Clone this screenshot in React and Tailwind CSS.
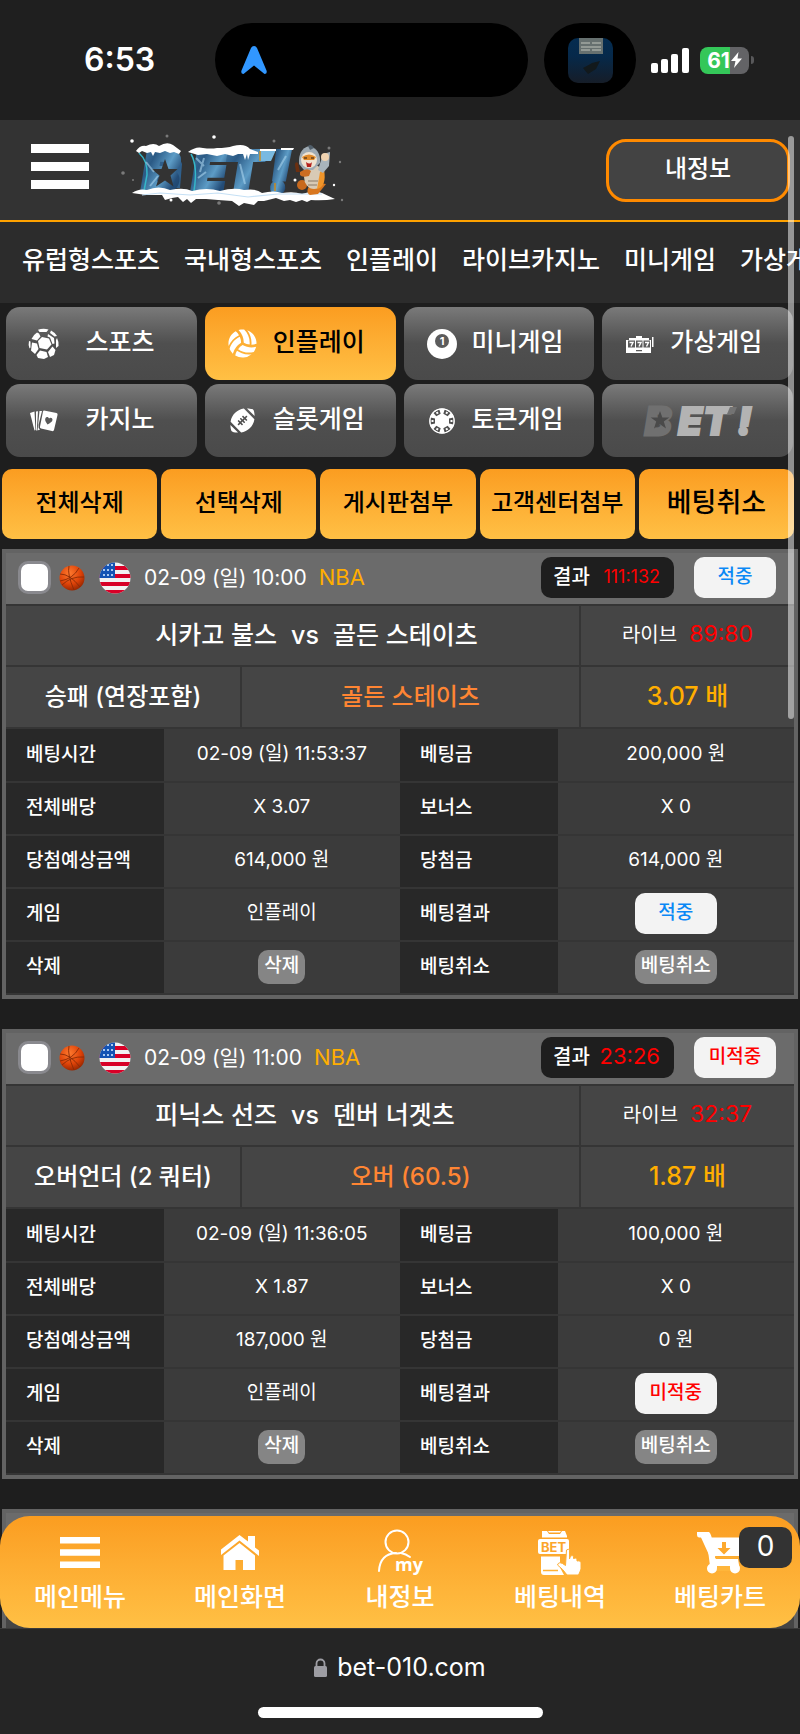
import { FaVolleyballBall, FaFootballBall } from 'react-icons/fa';

const navLinks = ['유럽형스포츠', '국내형스포츠', '인플레이', '라이브카지노', '미니게임', '가상게임'];

const actions = ['전체삭제', '선택삭제', '게시판첨부', '고객센터첨부'];

const bets = [
  {
    id: 1,
    date: '02-09 (일) 10:00',
    league: 'NBA',
    result: '111:132',
    live: '89:80',
    won: true,
    home: '시카고 불스',
    away: '골든 스테이츠',
    market: '승패 (연장포함)',
    pick: '골든 스테이츠',
    odds: '3.07',
    betTime: '02-09 (일) 11:53:37',
    stake: '200,000 원',
    expected: '614,000 원',
    payout: '614,000 원',
  },
  {
    id: 2,
    date: '02-09 (일) 11:00',
    league: 'NBA',
    result: '23:26',
    live: '32:37',
    won: false,
    home: '피닉스 선즈',
    away: '덴버 너겟츠',
    market: '오버언더 (2 쿼터)',
    pick: '오버 (60.5)',
    odds: '1.87',
    betTime: '02-09 (일) 11:36:05',
    stake: '100,000 원',
    expected: '187,000 원',
    payout: '0 원',
  },
];

const SoccerIcon = () => (
  <svg viewBox="0 0 32 32" className="h-8 w-8">
    <g fill="#fff">
      <path d="M14 9l7 1.500 2.500 6-4.500 5-7.500-1.500-1.500-7z" />
      <path d="M10 1.800Q15 0 20.500 1.500L18.500 4h-7z" />
      <path d="M9 4.500l2 1 1.500 3-3.500 4-5.500-1.500Q5 7 9 4.500z" />
      <path d="M23 2.500q4 2 6 5.500l-2.500.5L22 5z" />
      <path d="M20 6l6 4 .5 5.500-2 .500-2.500-6.500-2.500-1z" />
      <path d="M29 10q2 4 1.500 8L28 20V12z" />
      <path d="M1 13l1.500.500v6l-1 1Q0 17 1 13z" />
      <path d="M4 14.500l5 1 1.500 5.500-3.500 5-4-3.500z" />
      <path d="M12 22.500l6.500 1.500L20 29l-4 2-6-1-1.500-3z" />
      <path d="M24.500 18.500l3 3.500-1.500 5-4 2-2-5z" />
    </g>
  </svg>
);

const EightBallIcon = () => (
  <svg viewBox="0 0 30 30" className="h-[30px] w-[30px]">
    <circle cx="15" cy="15" r="15" fill="#fff" />
    <circle cx="15" cy="12" r="7" fill="#5c5c5c" />
    <text x="15" y="16" textAnchor="middle" fontSize="11" fontWeight="700" fill="#fff">1</text>
  </svg>
);

const SlotIcon = () => (
  <svg viewBox="0 0 28 18" className="h-[18px] w-7">
    <path d="M3 3h7V1h6v2h7v2h2v13H0V5h3z" fill="#fff" />
    <path d="M26 2h1.500v10H26z" fill="#fff" />
    <g fill="#5c5c5c">
      <path d="M2 5.500h7v7H2zM10 5.500h6.500v7H10zM17.500 5.500h6.500v7h-6.500zM10 15h6v1.200h-6z" />
    </g>
    <g fill="none" stroke="#fff" strokeWidth="1.400">
      <path d="M3.500 7.500h3.500l-2 4M11.500 7.500H15l-2 4M19 7.500h3.500l-2 4" />
    </g>
  </svg>
);

const CardsIcon = () => (
  <svg viewBox="0 0 28 22" className="h-[22px] w-7">
    <g fill="#fff">
      <path d="M0 3l4.500-1.500L5.500 20 4.500 20.500z" />
      <path d="M6 1.500L8 1.200 6.800 20.500h-.800z" />
      <path d="M9.500 1h2.500L8.500 15q-.5 3 1.500 4.500l-2.500 1z" />
      <path d="M14 .5l12.500 2.500Q28 3.500 27.500 5L24 20q-.500 1.500-2 1L11 18.500q-1.500-.500-1-2L13 1.500q.300-1 1-1z" />
    </g>
    <path d="M17.500 14.500c-2-3-3-4.500-2-6.500 1-1.500 3-1 3.500.500 1.500-1.500 3.500-.500 3.500 1.200 0 2-2.500 3.300-5 4.800z" fill="#5a5a5a" />
  </svg>
);

const ChipIcon = () => (
  <svg viewBox="0 0 26 26" className="h-[26px] w-[26px]">
    <circle cx="13" cy="13" r="12.500" fill="#fff" />
    {[30, 90, 150, 210, 270, 330].map((deg) => (
      <g key={deg} transform={`rotate(${deg} 13 13)`}>
        <path d="M9.500 1.500h7L15.500 6h-5z" fill="#4f4f4f" />
        <path d="M12 2.500h2v2h-2z" fill="#fff" />
      </g>
    ))}
    <circle cx="13" cy="13" r="12.200" fill="none" stroke="#fff" strokeWidth="1.200" />
  </svg>
);

const GhostLogo = () => (
  <svg viewBox="0 0 120 60" className="h-[60px] w-[120px]" fontFamily="Inter" fontWeight="900" fontStyle="italic" fontSize="39">
    <text x="7" y="44" fill="#707070" stroke="#707070" strokeWidth="3">B</text>
    <path d="M22 20l2.300 6.500h7l-5.500 4 2.200 7-6-4.300-6 4.300 2.200-7-5.500-4h7z" fill="#4a4a4a" />
    <g fill="#b3b3b3" stroke="#b3b3b3" strokeWidth="2">
      <text x="40" y="44">E</text>
      <text x="65" y="44">T</text>
      <text x="99" y="44">!</text>
    </g>
    <path d="M92 16h7l-3 7h-7z" fill="#737373" />
  </svg>
);

const SnowLogo = () => (
  <svg viewBox="0 0 226 72" className="h-[72px] w-[226px]" role="img" aria-label="BET!">
    <defs>
      <linearGradient id="ice" x1="0" y1="0" x2="1" y2="1">
        <stop offset="0" stopColor="#4d86ad" />
        <stop offset=".3" stopColor="#2b5a85" />
        <stop offset=".55" stopColor="#5d9cc6" />
        <stop offset=".75" stopColor="#244d78" />
        <stop offset="1" stopColor="#18385e" />
      </linearGradient>
    </defs>
    <path d="M30 20h28l4 10-2 24H28z" fill="#2f5f8b" />
    <g fontFamily="Inter" fontWeight="900" fontStyle="italic" fontSize="56" fill="url(#ice)" stroke="url(#ice)" strokeWidth="4">
      <text x="22" y="58">B</text>
      <text x="72" y="58">E</text>
      <text x="104" y="58">T</text>
      <text x="149" y="58">!</text>
    </g>
    <path d="M19 19q9 8 8 22l-3 16M71 20q7 12 3 37" fill="none" stroke="#35b7c9" strokeWidth="1.500" />
    <path d="M45 25l3.500 10h9l-7 6.500 3 11-8.500-6-9 6 3.500-11-8-6.500h10z" fill="#333" />
    <path d="M26 28l8 10M30 52l8-10M76 24l8 8M78 44l8-6M84 24l-4 14M120 30l5 20M166 22l-8 14" stroke="#a9d4ee" strokeWidth="2" opacity=".6" />
    <path d="M140 17l16-1-5 11h-12z" fill="#79b9e0" />
    <path d="M140 17v10M155 49v8" stroke="#c98a1f" strokeWidth="1.500" />
    <g fill="#fff">
      <path d="M16 17q4-6 10-5 8-4 13 0 8-5 14-1l8 6-2 3-5-2-4 1-5-2-5 2-5-1-2 4-2-4-4 1-5-2-3 2z" />
      <path d="M68 18q8-6 15-4 8 1 14 0 10 0 16-2 12-3 17 3l8 3v2h-8l-2 6-1-6-2 6-2-6h-5l-5 2-8-2-8 2-10-2-9 1z" />
      <path d="M140 15h16v2h-16zM161 14h13l-1 2h-12z" />
      <path d="M12 59q7-5 15-3 12-5 23 0 14-3 22 1 15-4 28 0 14-4 24-1 12-2 18 3 12-3 20 0 12-2 20 1 12-4 20-1l13 6q-12 2-24 1l-4 2-5-2-6 2-6-2-6 1-8-3-12 3h-6l-4 4-10-2-5 3-7-5-14-1-12-1-10 0-5 4-4-4-4 3-5-5-6 1-7 2-3-5-16 0z" />
    </g>
    <path d="M22 61l18-2 30 2 28-2 30 4 30-3h44" fill="none" stroke="#c5e0f5" strokeWidth="1.200" />
    {/* mascot */}
    <ellipse cx="182" cy="51" rx="5" ry="5" fill="#c8691d" />
    <path d="M192 48q-8 10-2 13l8-1 8-10z" fill="#d9771f" />
    <ellipse cx="194" cy="43" rx="10" ry="12" fill="#d8cab5" />
    <path d="M197 55q10-2 7-20l-4 3z" fill="#f0952a" />
    <path d="M198 36l5-16 7-2-1 14-6 7z" fill="#a9b4bb" />
    <circle cx="205" cy="23" r="4" fill="#f0d3b0" />
    <path d="M179 30q-1-15 10-18 12 3 11 17l-7 7h-9z" fill="#9eaab3" />
    <path d="M188 12q3-3 6 2l-4 2z" fill="#515f6b" />
    <circle cx="189" cy="26" r="8" fill="#f0e2cf" />
    <path d="M182 23q7-5 14 0l-2 3h-10z" fill="#e08a2a" />
    <path d="M184 24h3M191 24h3" stroke="#2a1a10" strokeWidth="1.200" />
    <path d="M186 28q4 3 6 0l-1 5h-4z" fill="#b3201d" />
    <path d="M175 31q0-4 3-2l2 9h-4z" fill="#6b2f10" />
    <path d="M180 38q7-5 11-1l-2 5q-7 2-9-1z" fill="#cc6d22" />
    <path d="M188 47h10M188 51h9" stroke="#8a7a68" strokeWidth="1" />
    <g fill="#fff">
      <circle cx="12" cy="7" r="1.800" />
      <circle cx="94" cy="3" r="1.800" />
      <circle cx="175" cy="46" r="1.500" />
      <circle cx="214" cy="51" r="1.200" />
      <circle cx="51" cy="66" r="1.500" />
      <g opacity=".35">
        <circle cx="3" cy="39" r="1.800" />
        <circle cx="47" cy="2" r="1.500" />
        <circle cx="154" cy="7" r="1.500" />
        <circle cx="209" cy="14" r="1.500" />
        <circle cx="220" cy="28" r="1.200" />
        <circle cx="99" cy="69" r="1.800" />
        <circle cx="222" cy="66" r="1.200" />
        <circle cx="13" cy="46" r="1" />
      </g>
    </g>
  </svg>
);

const Basketball = () => (
  <svg viewBox="0 0 26 26" className="h-[26px] w-[26px]">
    <defs>
      <radialGradient id="ball" cx=".4" cy=".3" r=".75">
        <stop offset="0" stopColor="#ff7a2e" />
        <stop offset=".6" stopColor="#dd4208" />
        <stop offset="1" stopColor="#8f2400" />
      </radialGradient>
    </defs>
    <circle cx="13" cy="13" r="12.500" fill="url(#ball)" />
    <path d="M1 16Q14 14 20 3M3 20q9-9 22-8M10 1q-2 8 5 24M1 9q10 0 20 13" fill="none" stroke="#8a2a06" strokeWidth=".9" />
  </svg>
);

const UsFlag = () => (
  <svg viewBox="0 0 32 32" className="h-8 w-8">
    <clipPath id="round"><circle cx="16" cy="16" r="15.500" /></clipPath>
    <g clipPath="url(#round)">
      <path d="M0 0h32v32H0z" fill="#f2f2f2" />
      <path d="M0 4h32v4H0zM0 12h32v4H0zM0 20h32v4H0zM0 28h32v4H0z" fill="#d80027" />
      <path d="M0 0h16v16H0z" fill="#1353b4" />
      <path d="M4 7h2v2H4zM8 7h2v2H8zM12 7h2v2h-2zM4 12h2v2H4zM8 12h2v2H8zM12 12h2v2h-2zM8 2h2v2H8zM12 2h2v2h-2z" fill="#a8c8f0" />
    </g>
  </svg>
);

const MenuIcon = () => (
  <svg viewBox="0 0 40 31" className="h-[31px] w-10" fill="#fff">
    <path d="M0 0h40v6.500H0zM0 12.200h40v6.500H0zM0 24.500h40V31H0z" />
  </svg>
);

const HomeIcon = () => (
  <svg viewBox="0 0 38 36" className="h-9 w-[38px]">
    <path d="M0 14.500L18.500 0 27 6.500V1h7v11.500l4 3v5.500L18.500 5.500 0 20z" fill="#fff" />
    <path d="M2.500 20.500l16-12.500L34 20.500V35H22V25h-7.500v10h-12z" fill="#fff" />
  </svg>
);

const MyIcon = () => (
  <svg viewBox="0 0 50 48" className="h-12 w-[50px]">
    <g fill="none" stroke="#fff" strokeWidth="2" strokeLinecap="round">
      <circle cx="22" cy="13" r="11.500" />
      <path d="M4 42q1-17 17-18M26 24q5 1 9 4" />
    </g>
    <text x="20" y="42" fontSize="18" fontWeight="700" fill="#fff" fontFamily="Open Sans">my</text>
  </svg>
);

const BetSlipIcon = () => (
  <svg viewBox="0 0 44 44" className="h-11 w-11">
    <path d="M4 0h5l2 3h11l2-3h3l2 5v1.500H4z" fill="#fff" />
    <path d="M10 0h13l-1 1.500H11z" fill="#fff" />
    <rect x="0" y="8" width="31" height="15" rx="2" fill="#fff" />
    <text x="15.500" y="20.500" textAnchor="middle" fontSize="13" fontWeight="700" fill="#fca52a">BET</text>
    <path d="M3 25.500h19v11l4 7.500H6q-3 0-3-3z" fill="#fff" />
    <path d="M5 39.500h15" stroke="#ffb236" strokeWidth="1.500" />
    <path d="M28.500 19q2-1.500 3 0v9l1-3q2-1 3 .500v2q2-1 3.500.500v2q2-1 4 1V38q-1 3-2.500 6H29q-4-6-9.500-10 1-3.500 5-1.500l3 2z" fill="#fff" stroke="#fdae35" strokeWidth="1" />
  </svg>
);

const CartIcon = () => (
  <svg viewBox="0 0 46 42" className="h-[42px] w-[46px]">
    <path d="M1.500 0H11q2 0 2.500 2l1 3.500H46L43 24H18l1 3h22l1.500 9H18z" fill="#fff" />
    <path d="M0 0h12v5.500H2Q0 5 0 3zM9 3h5l5 31h-6z" fill="#fff" />
    <circle cx="15" cy="36.500" r="5" fill="#fff" />
    <circle cx="38" cy="36.500" r="5" fill="#fff" />
    <path d="M20 34h13v5H20z" fill="#ffb63b" />
    <path d="M25 10h4v6h4.500L27 22.500 20.500 16H25z" fill="#fda92e" />
    <path d="M18 25.500h24" stroke="#ffb034" strokeWidth="1.500" />
  </svg>
);

const categories = [
  { label: '스포츠', icon: <SoccerIcon /> },
  { label: '인플레이', icon: <FaVolleyballBall size={29} color="#fff" />, active: true },
  { label: '미니게임', icon: <EightBallIcon /> },
  { label: '가상게임', icon: <SlotIcon /> },
  { label: '카지노', icon: <CardsIcon /> },
  { label: '슬롯게임', icon: <FaFootballBall size={25} color="#fff" /> },
  { label: '토큰게임', icon: <ChipIcon /> },
];

const tabs = [
  { label: '메인메뉴', icon: <MenuIcon /> },
  { label: '메인화면', icon: <HomeIcon /> },
  { label: '내정보', icon: <MyIcon /> },
  { label: '베팅내역', icon: <BetSlipIcon /> },
  { label: '베팅카트', icon: <CartIcon />, count: 0 },
];

const StatusBar = () => (
  <div className="flex h-[120px] shrink-0 items-center bg-[#1f1f1f]">
    <div className="w-[215px] pl-[84px] text-[32px] font-semibold leading-none">6:53</div>
    <div className="flex h-[74px] min-w-0 flex-1 items-center rounded-full bg-black pl-[26px]">
      <svg viewBox="0 0 26 28" className="h-7 w-[26px]">
        <path d="M13 0q2 0 3 2l9.500 22.500q1 3.500-2 3.500L13 19.500 2.500 28Q-.500 28 .5 24.500L10 2q1-2 3-2z" fill="#3197ff" />
      </svg>
    </div>
    <div className="ml-4 flex h-[74px] w-[92px] items-center justify-center rounded-full bg-black">
      <svg viewBox="0 0 45 45" className="h-[45px] w-[45px] rounded-[10px]">
        <defs>
          <linearGradient id="photo" x1="0" y1="0" x2="0" y2="1">
            <stop offset="0" stopColor="#042c50" />
            <stop offset=".4" stopColor="#06294a" />
            <stop offset="1" stopColor="#161d28" />
          </linearGradient>
        </defs>
        <path d="M0 0h45v45H0z" fill="url(#photo)" />
        <path d="M11 0h24v16H11z" fill="#66706f" />
        <path d="M13 5h9M24 5h9M13 9h20M13 12h9M24 12h9" stroke="#a3a8a2" strokeWidth="1.500" />
        <path d="M15 30q6-3 9-5l8-2-4 8-8 5z" fill="#12191c" />
      </svg>
    </div>
    <div className="ml-[15px] flex w-[149px] items-center gap-[11px]">
      <svg viewBox="0 0 38 25" className="h-[25px] w-[38px]" fill="#fff">
        <rect x="0" y="15" width="7" height="10" rx="2" />
        <rect x="10" y="11" width="7" height="14" rx="2" />
        <rect x="20" y="6" width="7" height="19" rx="2" />
        <rect x="31" y="0" width="7" height="25" rx="2" />
      </svg>
      <div className="flex items-center gap-0.5">
        <div className="flex h-[27px] w-[49px] items-center justify-center gap-px rounded-lg bg-linear-to-r from-[#34c759] from-62% to-[#636366] to-62%">
          <span className="text-[21px] font-bold leading-none">61</span>
          <svg viewBox="0 0 11 16" className="h-4 w-[11px]" fill="#fff">
            <path d="M7.500 0L0 9h4.500L3 16l8-9.500H6.500z" />
          </svg>
        </div>
        <div className="h-2 w-[3px] rounded-r-full bg-[#58585a]" />
      </div>
    </div>
  </div>
);

const Verdict = ({ won }) => (
  <span
    className={`flex h-[41px] w-[82px] items-center justify-center rounded-[10px] bg-[#f3f3f3] text-[19px] font-medium ${
      won ? 'text-[#0a88f5]' : 'text-[#ff0000]'
    }`}
  >
    {won ? '적중' : '미적중'}
  </span>
);

const DetailRow = ({ left, leftValue, right, rightValue }) => (
  <tr className="h-[53px] border-b-2 border-[#353535]">
    <th scope="row" className="bg-[#282828] pl-5 text-left font-medium">{left}</th>
    <td className="bg-[#3b3b3b] pb-0.5 text-center">{leftValue}</td>
    <th scope="row" className="bg-[#282828] pl-5 text-left font-medium">{right}</th>
    <td className="bg-[#3b3b3b] pb-0.5 text-center">{rightValue}</td>
  </tr>
);

const SmallButton = ({ children }) => (
  <button className="rounded-[10px] bg-[#858585] px-1.5 pt-0.5 pb-1 font-medium leading-7">{children}</button>
);

const BetCard = ({ bet }) => (
  <article className="border-4 border-[#636363] bg-[#454545]">
    <header className="flex h-[53px] items-center border-b-2 border-[#353535] bg-[#6b6b6b] pr-[18px] pb-0.5 pl-3">
      <input
        type="checkbox"
        aria-label={`${bet.home} vs ${bet.away}`}
        className="h-[33px] w-[33px] appearance-none rounded-[10px] border-3 border-[#89898e] bg-white"
      />
      <span className="ml-2"><Basketball /></span>
      <span className="ml-3.5"><UsFlag /></span>
      <span className="ml-[13px] text-[21px]">{bet.date}</span>
      <span className="ml-3 text-[22px] text-[#ffae00]">{bet.league}</span>
      <span className="ml-auto flex h-[41px] w-[133px] items-center justify-between rounded-[10px] bg-[#1e1e1e] pr-3.5 pb-0.5 pl-3 text-[20px] font-medium">
        결과
        <span className={bet.result.length > 5 ? 'text-[18px] font-normal text-[#ff0000]' : 'text-[22px] font-normal text-[#ff0000]'}>
          {bet.result}
        </span>
      </span>
      <span className="ml-5"><Verdict won={bet.won} /></span>
    </header>
    <div className="grid grid-cols-[573fr_215fr] border-b-2 border-[#353535]">
      <div className="grid h-[59px] grid-cols-[271fr_56fr_246fr] items-center text-[25px] font-medium whitespace-nowrap">
        <span className="text-right">{bet.home}</span>
        <span className="text-center text-[25px]">vs</span>
        <span>{bet.away}</span>
      </div>
      <div className="flex items-center justify-center gap-3 border-l-2 border-[#353535] pb-0.5 text-[20px]">
        라이브
        <span className="text-[23px] text-[#ff0000]">{bet.live}</span>
      </div>
    </div>
    <div className="grid h-[62px] grid-cols-[234fr_339fr_215fr] border-b-2 border-[#353535] text-[24px] font-medium *:flex *:items-center *:justify-center">
      <div>{bet.market}</div>
      <div className="border-l-2 border-[#353535] text-[#ff8533]">{bet.pick}</div>
      <div className="border-l-2 border-[#353535] text-[25px] text-[#ffae00]">{bet.odds} 배</div>
    </div>
    <table className="w-full table-fixed border-collapse text-[19px]">
      <colgroup>
        <col className="w-1/5" />
        <col className="w-[30%]" />
        <col className="w-1/5" />
        <col className="w-[30%]" />
      </colgroup>
      <tbody>
        <DetailRow left="베팅시간" leftValue={bet.betTime} right="베팅금" rightValue={bet.stake} />
        <DetailRow left="전체배당" leftValue={`X ${bet.odds}`} right="보너스" rightValue="X 0" />
        <DetailRow left="당첨예상금액" leftValue={bet.expected} right="당첨금" rightValue={bet.payout} />
        <DetailRow
          left="게임"
          leftValue="인플레이"
          right="베팅결과"
          rightValue={<div className="flex justify-center"><Verdict won={bet.won} /></div>}
        />
        <DetailRow
          left="삭제"
          leftValue={<SmallButton>삭제</SmallButton>}
          right="베팅취소"
          rightValue={<SmallButton>베팅취소</SmallButton>}
        />
      </tbody>
    </table>
  </article>
);

const orange = 'bg-linear-to-b from-[#fb9d20] to-[#ffc044]';
const gray = 'bg-linear-to-b from-[#7a7a7a] via-[#4f4f4f] via-50% to-[#4a4a4a]';

export default function App() {
  return (
    <div className="flex h-screen flex-col overflow-hidden bg-[#1e1e1e] font-['Inter','Noto_Sans_CJK_KR',sans-serif] text-white">
      <StatusBar />

      <div className="relative min-h-0 flex-1 overflow-hidden">
        <header className="flex h-[102px] items-center border-b-2 border-[#ffa200] bg-[#333] pr-2.5 pl-[31px]">
          <button aria-label="메뉴" className="flex w-[58px] flex-col gap-[9px] pb-2">
            <span className="h-[9px] bg-white" />
            <span className="h-[9px] bg-white" />
            <span className="h-[9px] bg-white" />
          </button>
          <a href="#home" className="ml-[31px]"><SnowLogo /></a>
          <button className="ml-auto h-[63px] w-[184px] rounded-[20px] border-3 border-[#ff8a00] bg-[#434343] pb-0.5 text-[24px] font-medium">
            내정보
          </button>
        </header>

        <nav className="flex h-[81px] items-center gap-6 overflow-hidden bg-[#2c2c2c] pb-1 pl-[22px] text-[25px] font-medium whitespace-nowrap">
          {navLinks.map((link) => (
            <a key={link} href="#nav">{link}</a>
          ))}
        </nav>

        <div className="grid grid-cols-4 gap-x-2 gap-y-1 pt-1 pr-[7px] pl-1.5">
          {categories.map((item) => (
            <button
              key={item.label}
              className={`flex h-[73px] items-center rounded-[14px] pl-[18px] text-[25px] font-medium ${
                item.active ? `${orange} text-black` : gray
              }`}
            >
              <span className="flex w-10 shrink-0 justify-center">{item.icon}</span>
              <span className="w-28 pb-0.5 text-center whitespace-nowrap">{item.label}</span>
            </button>
          ))}
          <button aria-label="BET!" className={`flex h-[73px] items-center justify-center rounded-[14px] ${gray}`}>
            <GhostLogo />
          </button>
        </div>

        <div className="grid grid-cols-5 gap-1 pt-3 pr-1.5 pl-0.5">
          {actions.map((label) => (
            <button key={label} className={`h-[70px] rounded-[10px] pb-0.5 text-[24px] font-medium whitespace-nowrap text-black ${orange}`}>
              {label}
            </button>
          ))}
          <button className={`h-[70px] rounded-[10px] pb-0.5 text-[27px] font-medium whitespace-nowrap text-black ${orange}`}>
            베팅취소
          </button>
        </div>

        <main className="flex flex-col gap-[30px] px-0.5 pt-2.5">
          {bets.map((bet) => (
            <BetCard key={bet.id} bet={bet} />
          ))}
          <div className="h-[450px] border-4 border-[#636363] bg-[#454545]">
            <div className="h-[53px] border-b-2 border-[#353535] bg-[#6b6b6b]" />
          </div>
        </main>

        <div className="absolute top-4 right-1.5 h-[583px] w-1.5 rounded-full bg-white/50" />

        <nav className={`absolute inset-x-0 bottom-0 grid h-28 grid-cols-5 rounded-[30px] ${orange}`}>
          {tabs.map((tab) => (
            <a key={tab.label} href="#tab" className="relative flex flex-col items-center">
              <span className="flex h-[73px] items-center">{tab.icon}</span>
              <span className="text-[25px] leading-4 font-medium">{tab.label}</span>
              {tab.count !== undefined && (
                <span className="absolute top-[11px] right-2 flex h-[41px] w-[53px] items-center justify-center rounded-[10px] bg-[#333] pb-1 text-[28px]">
                  {tab.count}
                </span>
              )}
            </a>
          ))}
        </nav>
      </div>

      <footer className="flex h-[106px] shrink-0 flex-col items-center border-t border-[#3a3a3a] bg-[#252525]">
        <div className="mt-[22px] flex items-center gap-2.5 text-[25px] leading-8">
          <svg viewBox="0 0 13 19" className="h-[19px] w-[13px]">
            <path d="M2.500 9V5.500a4 4 0 0 1 8 0V9" fill="none" stroke="#9d9da3" strokeWidth="1.800" />
            <rect x="0" y="8" width="13" height="11" rx="1.500" fill="#9d9da3" />
          </svg>
          bet-010.com
        </div>
        <div className="mt-6 h-[11px] w-[285px] rounded-full bg-white" />
      </footer>
    </div>
  );
}
